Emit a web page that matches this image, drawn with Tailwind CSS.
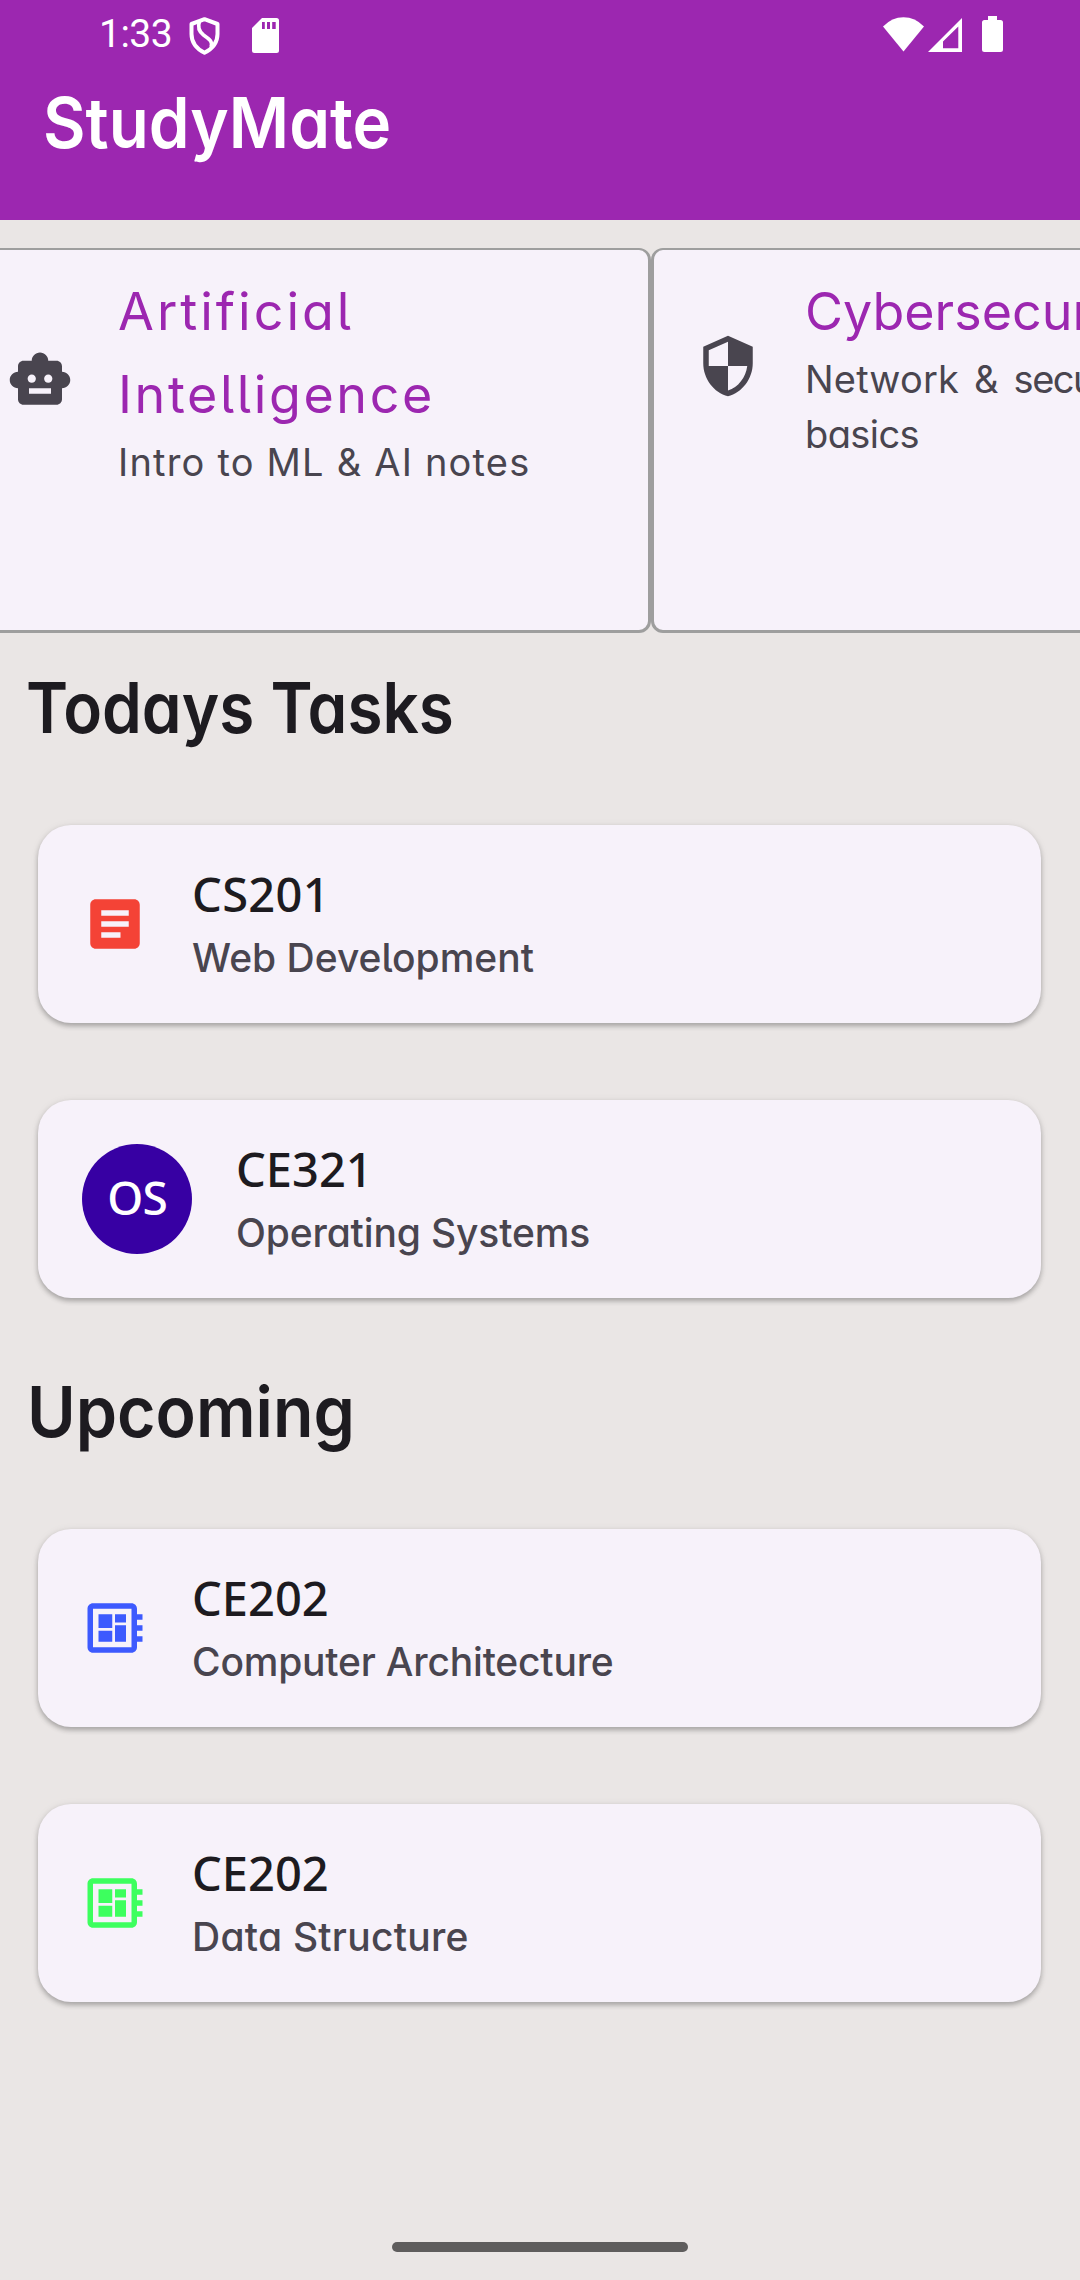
<!DOCTYPE html>
<html lang="en">
<head>
<meta charset="utf-8">
<title>StudyMate</title>
<script src="https://cdn.jsdelivr.net/npm/@tailwindcss/browser@4"></script>
</head>
<body class="flex flex-col w-[1080px] h-[2280px] overflow-hidden bg-[#eae6e5] font-[Inter,sans-serif] [font-feature-settings:'cv11','cv05'] text-[#1d1b20] whitespace-nowrap">

<header class="h-[220px] shrink-0 bg-[#9c27b0] text-white">
  <!-- Status bar -->
  <div class="flex h-[68px] items-center pl-[99px] pr-[77px]">
    <span class="w-[90px] font-[Roboto,sans-serif] text-[39px] leading-[68px] tracking-[-0.5px]">1:33</span>
    <svg class="w-[31px] h-[38px] mt-[3px]" viewBox="0 0 31 38" fill="none" stroke="#fff" stroke-width="4" stroke-linejoin="round">
      <path d="M15.500 2.200L28.500 7V17C28.500 25 24 31.500 15.500 35.800C7 31.500 2.500 25 2.500 17V7Z"/>
      <path d="M10.500 4.500C8.500 10 10 14.500 14.500 18C20 22 24 24 22 30" stroke-width="3.600"/>
    </svg>
    <svg class="ml-8 w-[27px] h-[35px] mt-[3px]" viewBox="0 0 27 35" fill="#fff">
      <path fill-rule="evenodd" d="M10 0H24.500Q27 0 27 2.500V32.500Q27 35 24.500 35H2.500Q0 35 0 32.500V10ZM10 4V11H12.800V4ZM15 4V11H18V4ZM20.200 4V11H23.700V4Z"/>
    </svg>
    <svg class="ml-auto w-[41px] h-[35px] mt-[1px]" viewBox="0 0 41 35" fill="#fff"><path d="M0 9.500Q9 .3 20.500 .3T41 9.500L20.500 34.500Z"/></svg>
    <svg class="ml-1 w-[34px] h-[34px] mt-[2px]" viewBox="0 0 34 34" fill="#fff"><path fill-rule="evenodd" d="M34 0V34H0ZM30.300 8.500L15 23.500V30.300H30.300Z"/></svg>
    <svg class="ml-5 w-[21px] h-[36px]" viewBox="0 0 21 36" fill="#fff"><path d="M6 0H15V4H18.500Q21 4 21 6.500V33.500Q21 36 18.500 36H2.500Q0 36 0 33.500V6.500Q0 4 2.500 4H6Z"/></svg>
  </div>
  <h1 class="mt-[13px] pl-[43px] text-[70px] leading-[84px] font-semibold"><span class="inline-block origin-left scale-x-[0.935]">StudyMate</span></h1>
</header>

<!-- Subject carousel, scrolled so that the first card starts off screen -->
<section class="mt-7 flex h-[385px] w-[1080px] shrink-0 overflow-hidden">
  <article class="-ml-[37px] flex w-[688px] shrink-0 gap-[44px] rounded-[12px] border-[3px] border-t-2 border-[#9e9e9e] bg-[#f7f2fa] pl-[41px] pt-5">
    <svg class="mt-[77px] size-[66px] shrink-0" viewBox="0 0 24 24" fill="#49454f"><path d="M20 9V7c0-1.100-.9-2-2-2h-3c0-1.660-1.340-3-3-3S9 3.340 9 5H6c-1.100 0-2 .9-2 2v2c-1.660 0-3 1.340-3 3s1.340 3 3 3v4c0 1.100.9 2 2 2h12c1.100 0 2-.9 2-2v-4c1.660 0 3-1.340 3-3s-1.340-3-3-3zM7.500 11.500c0-.83.67-1.500 1.500-1.500s1.500.67 1.500 1.500S9.830 13 9 13s-1.500-.67-1.500-1.500zM16 17H8v-2h8v2zm-1-4c-.83 0-1.500-.67-1.500-1.500S14.170 10 15 10s1.500.67 1.500 1.500S15.830 13 15 13z"/></svg>
    <div class="ml-px">
      <h3 class="text-[52px] leading-[83px] text-[#9c27b0]"><span class="tracking-[3px]">Artificial</span><br><span class="tracking-[2.600px]">Intelligence</span></h3>
      <p class="-mt-px text-[38px] leading-[55px] tracking-[1.200px] text-[#49454f]">Intro to ML &amp; AI notes</p>
    </div>
  </article>
  <article class="flex w-[688px] shrink-0 gap-[44px] rounded-[12px] border-[3px] border-t-2 border-[#9e9e9e] bg-[#f7f2fa] pl-[41px] pt-5">
    <svg class="mt-[63px] size-[66px] shrink-0" viewBox="0 0 24 24" fill="#49454f"><path d="M12 1L3 5v6c0 5.550 3.840 10.740 9 12 5.160-1.260 9-6.450 9-12V5l-9-4zm0 10.990h7c-.53 4.120-3.280 7.790-7 8.940V12H5V6.300l7-3.110v8.800z"/></svg>
    <div>
      <h3 class="text-[52px] leading-[83px] text-[#9c27b0]">Cybersecurity</h3>
      <p class="-mt-px text-[38px] leading-[55px] text-[#49454f]"><span class="tracking-[0.200px] [word-spacing:4px]">Network &amp; <span class="tracking-[-1.500px]">security</span></span><br><span class="tracking-[-0.600px]">basics</span></p>
    </div>
  </article>
</section>

<h2 class="mt-[33px] pl-[26px] text-[70px] leading-[84px] font-semibold"><span class="inline-block origin-left scale-x-[0.912]">Todays Tasks</span></h2>
<section class="mt-[75px] ml-[38px] flex w-[1003px] flex-col gap-[77px]">
  <article class="flex h-[198px] items-center gap-[44px] rounded-[33px] bg-[#f7f2fa] pl-[44px] shadow-[0_3px_5px_rgba(0,0,0,0.25),0_1px_8px_rgba(0,0,0,0.08)]">
    <svg class="size-[66px] shrink-0" viewBox="0 0 24 24" fill="#f44336"><path d="M19 3H5c-1.100 0-2 .9-2 2v14c0 1.100.9 2 2 2h14c1.100 0 2-.9 2-2V5c0-1.100-.9-2-2-2zm-5 14H7v-2h7v2zm3-4H7v-2h10v2zm0-4H7V7h10v2z"/></svg>
    <div class="pt-[2px]">
      <h3 class="font-['Noto_Sans',sans-serif] text-[47px] leading-[58px] font-medium tracking-[0.300px]">CS201</h3>
      <p class="mt-[7px] text-[39px] leading-[55px] font-medium text-[#49454f]">Web Development</p>
    </div>
  </article>
  <article class="flex h-[198px] items-center gap-[44px] rounded-[33px] bg-[#f7f2fa] pl-[44px] shadow-[0_3px_5px_rgba(0,0,0,0.25),0_1px_8px_rgba(0,0,0,0.08)]">
    <div class="flex size-[110px] shrink-0 items-center justify-center rounded-full bg-[#3700a3] pb-[4px] font-['Noto_Sans',sans-serif] text-[46px] leading-[60px] font-medium tracking-[-1px] text-white">OS</div>
    <div class="pt-[2px]">
      <h3 class="font-['Noto_Sans',sans-serif] text-[47px] leading-[58px] font-medium">CE321</h3>
      <p class="mt-[7px] text-[39px] leading-[55px] font-medium tracking-[-0.150px] text-[#49454f]">Operating Systems</p>
    </div>
  </article>
</section>

<h2 class="mt-[72px] pl-[27px] text-[70px] leading-[84px] font-semibold"><span class="inline-block origin-left scale-x-[0.946]">Upcoming</span></h2>
<section class="mt-[75px] ml-[38px] flex w-[1003px] flex-col gap-[77px]">
  <article class="flex h-[198px] items-center gap-[44px] rounded-[33px] bg-[#f7f2fa] pl-[44px] shadow-[0_3px_5px_rgba(0,0,0,0.25),0_1px_8px_rgba(0,0,0,0.08)]">
    <svg class="size-[66px] shrink-0" viewBox="0 0 24 24" fill="#3d5afe"><path d="M22 9V7h-2V5c0-1.100-.9-2-2-2H4c-1.100 0-2 .9-2 2v14c0 1.100.9 2 2 2h14c1.100 0 2-.9 2-2v-2h2v-2h-2v-2h2v-2h-2V9h2zm-4 10H4V5h14v14zM6 13h5v4H6v-4zm6-6h4v3h-4V7zM6 7h5v5H6V7zm6 4h4v6h-4v-6z"/></svg>
    <div class="pt-[2px]">
      <h3 class="font-['Noto_Sans',sans-serif] text-[47px] leading-[58px] font-medium">CE202</h3>
      <p class="mt-[7px] text-[39px] leading-[55px] font-medium tracking-[-0.200px] text-[#49454f]">Computer Architecture</p>
    </div>
  </article>
  <article class="flex h-[198px] items-center gap-[44px] rounded-[33px] bg-[#f7f2fa] pl-[44px] shadow-[0_3px_5px_rgba(0,0,0,0.25),0_1px_8px_rgba(0,0,0,0.08)]">
    <svg class="size-[66px] shrink-0" viewBox="0 0 24 24" fill="#3dff5e"><path d="M22 9V7h-2V5c0-1.100-.9-2-2-2H4c-1.100 0-2 .9-2 2v14c0 1.100.9 2 2 2h14c1.100 0 2-.9 2-2v-2h2v-2h-2v-2h2v-2h-2V9h2zm-4 10H4V5h14v14zM6 13h5v4H6v-4zm6-6h4v3h-4V7zM6 7h5v5H6V7zm6 4h4v6h-4v-6z"/></svg>
    <div class="pt-[2px]">
      <h3 class="font-['Noto_Sans',sans-serif] text-[47px] leading-[58px] font-medium">CE202</h3>
      <p class="mt-[7px] text-[39px] leading-[55px] font-medium tracking-[0.250px] text-[#49454f]">Data Structure</p>
    </div>
  </article>
</section>

<div class="mt-auto mb-7 h-[10px] w-[296px] shrink-0 self-center rounded-full bg-[#5f5d5d]"></div>
</body>
</html>
